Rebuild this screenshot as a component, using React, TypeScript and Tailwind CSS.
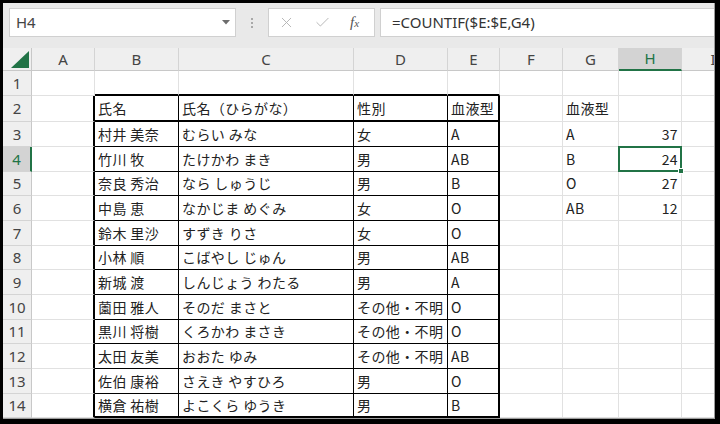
import * as React from 'react';
import { X, Check } from 'lucide-react';

// ──────────────────────────────────────────────
// Sheet data
// ──────────────────────────────────────────────
const COL_LABELS = ['A', 'B', 'C', 'D', 'E', 'F', 'G', 'H', 'I'];

const TABLE: string[][] = [
  ['氏名', '氏名（ひらがな）', '性別', '血液型'],
  ['村井 美奈', 'むらい みな', '女', 'A'],
  ['竹川 牧', 'たけかわ まき', '男', 'AB'],
  ['奈良 秀治', 'なら しゅうじ', '男', 'B'],
  ['中島 恵', 'なかじま めぐみ', '女', 'O'],
  ['鈴木 里沙', 'すずき りさ', '女', 'O'],
  ['小林 順', 'こばやし じゅん', '男', 'AB'],
  ['新城 渡', 'しんじょう わたる', '男', 'A'],
  ['薗田 雅人', 'そのだ まさと', 'その他・不明', 'O'],
  ['黒川 将樹', 'くろかわ まさき', 'その他・不明', 'O'],
  ['太田 友美', 'おおた ゆみ', 'その他・不明', 'AB'],
  ['佐伯 康裕', 'さえき やすひろ', '男', 'O'],
  ['横倉 祐樹', 'よこくら ゆうき', '男', 'B'],
];

// G / H summary, keyed by row number
const SUMMARY: Record<number, [string, string]> = {
  2: ['血液型', ''],
  3: ['A', '37'],
  4: ['B', '24'],
  5: ['O', '27'],
  6: ['AB', '12'],
};

const ROWS = Array.from({ length: 14 }, (_, i) => i + 1);

const cellValue = (r: number, c: number): string => {
  if (r >= 2 && c >= 1 && c <= 4) return TABLE[r - 2][c - 1];
  if (c === 6 && SUMMARY[r]) return SUMMARY[r][0];
  if (c === 7 && SUMMARY[r]) return SUMMARY[r][1];
  return '';
};

// borders for a body cell: c is 0-based column index (0 = A)
const cellBorder = (r: number, c: number) => {
  const inTable = r >= 2 && c >= 1 && c <= 4;
  let right = 'border-r border-r-[#e1e1e1]';
  let bottom = 'border-b border-b-[#e1e1e1]';
  if (inTable) {
    right = c === 4 ? 'border-r-2 border-r-black' : 'border-r border-r-black';
    bottom = r === 2 || r === 14 ? 'border-b-2 border-b-black' : 'border-b border-b-black';
  }
  if (c === 0 && r >= 2) right = 'border-r-2 border-r-black';
  if (r === 1 && c >= 1 && c <= 4) bottom = 'border-b-2 border-b-black';
  return `${right} ${bottom}`;
};

// ──────────────────────────────────────────────
// Formula bar
// ──────────────────────────────────────────────
function FormulaBar() {
  return (
    <div className="h-[45px] shrink-0 bg-[#e9e9e9] flex items-start pt-[5px] pl-[6px] font-['Noto_Sans',sans-serif]">
      <div className="w-[227px] h-[29px] bg-white border border-[#d0d0d0] flex items-center pl-[6px] pr-[5px]">
        <span className="flex-1 text-[15px] text-[#444]">H4</span>
        <svg width="8" height="5" viewBox="0 0 8 5">
          <path d="M0 0h8L4 4.5z" fill="#6d6d6d" />
        </svg>
      </div>
      <div className="w-[32px] h-[29px] flex flex-col items-center justify-center gap-[2px]">
        <span className="w-[2px] h-[2px] bg-[#a8a8a8]" />
        <span className="w-[2px] h-[2px] bg-[#a8a8a8]" />
        <span className="w-[2px] h-[2px] bg-[#a8a8a8]" />
      </div>
      <div className="w-[107px] h-[29px] bg-white border border-[#d0d0d0] flex items-center pl-[9px] gap-[19px]">
        <X size={17} strokeWidth={1.3} className="text-[#b3b3b3]" />
        <Check size={17} strokeWidth={1.3} className="text-[#b3b3b3]" />
        <span className="font-['Liberation_Serif',serif] italic text-[#555] text-[15px] leading-none">
          f<span className="text-[11px]">x</span>
        </span>
      </div>
      <div className="flex-1 ml-[5px] h-[29px] bg-white border border-r-0 border-[#d0d0d0] flex items-center pl-[11px] text-[15px] text-[#333]">
        =COUNTIF($E:$E,G4)
      </div>
    </div>
  );
}

// ──────────────────────────────────────────────
// Grid
// ──────────────────────────────────────────────
function Sheet() {
  return (
    <div className="grid grid-cols-[29px_63px_84px_175px_94px_52px_63px_56px_63px_63px] grid-rows-[23px_25px_26px_25px_25px_24px_25px_25px_24px_25px_25px_24px_25px_25px_24px] bg-white">
      {/* corner */}
      <div className="bg-[#efefef] border-r border-b border-[#c8c8c8] flex items-end justify-end pr-[2px] pb-[2px]">
        <svg width="18" height="17" viewBox="0 0 18 17">
          <path d="M18 0V17H0z" fill="#217346" />
        </svg>
      </div>
      {COL_LABELS.map((l) => (
        <div
          key={l}
          className={`flex items-center justify-center text-[15px] font-['Noto_Sans',sans-serif] border-r border-[#d4d4d4] ${
            l === 'H'
              ? 'bg-[#d3d3d3] text-[#217346] border-b-2 border-b-[#217346]'
              : 'bg-[#efefef] text-[#444] border-b border-b-[#c8c8c8]'
          }`}
        >
          {l}
        </div>
      ))}

      {ROWS.map((r) => (
        <React.Fragment key={r}>
          <div
            className={`flex items-center justify-center text-[15px] font-['Noto_Sans',sans-serif] border-b border-b-[#d4d4d4] ${
              r === 4
                ? 'bg-[#d3d3d3] text-[#217346] border-r-2 border-r-[#217346]'
                : 'bg-[#efefef] text-[#444] border-r border-r-[#c8c8c8]'
            }`}
          >
            {r}
          </div>
          {COL_LABELS.map((_, c) => {
            const v = cellValue(r, c);
            const numeric = c === 7;
            return (
              <div
                key={c}
                className={`relative flex items-center whitespace-nowrap text-[14px] tracking-[0.4px] text-[#222] font-['Noto_Sans_CJK_JP',sans-serif] ${
                  numeric ? 'justify-end pr-[3px]' : 'pl-[3px]'
                } ${cellBorder(r, c)}`}
              >
                {v}
                {r === 4 && c === 7 && (
                  <div className="absolute -left-px -top-px right-[-1px] bottom-[-1px] border-2 border-[#217346] z-10">
                    <div className="absolute -right-[4px] -bottom-[4px] w-[6px] h-[6px] bg-[#217346] border border-white" />
                  </div>
                )}
              </div>
            );
          })}
        </React.Fragment>
      ))}
    </div>
  );
}

export default function App() {
  return (
    <div className="w-[720px] h-[424px] bg-black pt-[3px] pl-[3px] pr-[5px] pb-[5px]">
      <div className="w-full h-full overflow-hidden bg-white border-r border-b border-[#9c9c9c] flex flex-col">
        <FormulaBar />
        <Sheet />
      </div>
    </div>
  );
}
